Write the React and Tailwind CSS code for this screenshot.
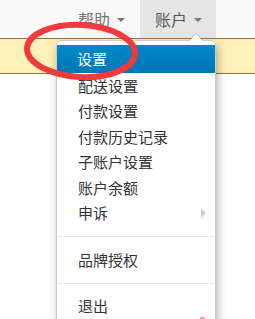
import React from 'react';

const font = { fontFamily: '"Noto Sans CJK SC", "Noto Sans", sans-serif' };

const Caret = () => (
    <span className="inline-block w-0 h-0 border-l-[4px] border-r-[4px] border-t-[4px] border-l-transparent border-r-transparent border-t-[#777] ml-[7px] mt-[2px]" />
);

const Item = ({ children }) => (
    <div className="flex items-center justify-between pl-[21px] pr-[9px] h-[25.5px] text-[15px] text-[#333] whitespace-nowrap">
        {children}
    </div>
);

const Divider = () => <div className="my-[10px] h-px bg-[#e5e5e5] mx-[1px]" />;

export default function App() {
    return (
        <div className="relative w-[255px] h-[319px] overflow-hidden bg-white" style={font}>

            {/* ── Top nav ── */}
            <div className="h-[38px] bg-[#f9f9f9] flex justify-end pr-[39px]">
                <div className="flex items-center pr-[15px] text-[16px] text-[#777]">
                    帮助<Caret />
                </div>
                <div className="flex items-center pl-[15px] pr-[14px] bg-[#e5e5e5] text-[16px] text-[#555]">
                    账户<Caret />
                </div>
            </div>

            {/* ── Notice band ── */}
            <div className="h-[36px] bg-[#fdf0b8] border-t border-b border-[#a8702e]" />

            {/* ── Dropdown menu ── */}
            <div className="absolute left-[56px] top-[40px] w-[160px] flex flex-col bg-white border border-black/20 rounded-[5px] shadow-[2px_5px_10px_rgba(0,0,0,0.3)] pt-[4px] pb-[5px]">
                {/* caret pointing up */}
                <div className="absolute -top-[8px] right-[11px] w-0 h-0 border-l-[8px] border-r-[8px] border-b-[8px] border-l-transparent border-r-transparent border-b-black/20" />
                <div className="absolute -top-[7px] right-[12px] w-0 h-0 border-l-[7px] border-r-[7px] border-b-[7px] border-l-transparent border-r-transparent border-b-white" />

                <div className="flex items-center pl-[20px] h-[28px] text-[15px] text-white bg-gradient-to-b from-[#0088cc] to-[#0077b3]">
                    设置
                </div>
                {['配送设置', '付款设置', '付款历史记录', '子账户设置', '账户余额'].map((t) => (
                    <Item key={t}>{t}</Item>
                ))}
                <Item>
                    申诉
                    <span className="w-0 h-0 border-t-[5px] border-b-[5px] border-l-[5px] border-t-transparent border-b-transparent border-l-[#ccc]" />
                </Item>
                <Divider />
                <Item>品牌授权</Item>
                <Divider />
                <Item>退出</Item>
            </div>

            {/* ── Red annotation ellipse ── */}
            <svg className="absolute inset-0 pointer-events-none" width="255" height="319" viewBox="0 0 255 319">
                <ellipse cx="81" cy="51" rx="54" ry="26" transform="rotate(3 81 51)" fill="none" stroke="#f03a3c" strokeWidth="6" />
                <rect x="200" y="317" width="5" height="2" fill="#f6a3a3" />
            </svg>
        </div>
    );
}
